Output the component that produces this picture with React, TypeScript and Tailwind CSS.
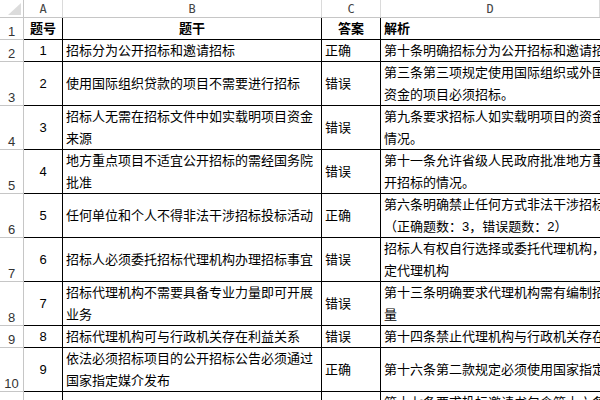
const COLS = ['A', 'B', 'C', 'D'];

type Row = {
    h: string;
    no: string;
    stem: string[];
    ans: string;
    note: string[];
};

const ROWS: Row[] = [
    { h: 'h-[22px]', no: '1', stem: ['招标分为公开招标和邀请招标'], ans: '正确', note: ['第十条明确招标分为公开招标和邀请招标。'] },
    { h: 'h-[44px]', no: '2', stem: ['使用国际组织贷款的项目不需要进行招标'], ans: '错误', note: ['第三条第三项规定使用国际组织或外国政府贷款', '资金的项目必须招标。'] },
    { h: 'h-[44px]', no: '3', stem: ['招标人无需在招标文件中如实载明项目资金', '来源'], ans: '错误', note: ['第九条要求招标人如实载明项目的资金来源等', '情况。'] },
    { h: 'h-[44px]', no: '4', stem: ['地方重点项目不适宜公开招标的需经国务院', '批准'], ans: '错误', note: ['第十一条允许省级人民政府批准地方重点项目不公', '开招标的情况。'] },
    { h: 'h-[44px]', no: '5', stem: ['任何单位和个人不得非法干涉招标投标活动'], ans: '正确', note: ['第六条明确禁止任何方式非法干涉招标投标活动。', '（正确题数：3，错误题数：2）'] },
    { h: 'h-[44px]', no: '6', stem: ['招标人必须委托招标代理机构办理招标事宜'], ans: '错误', note: ['招标人有权自行选择或委托代理机构，不得强制指', '定代理机构'] },
    { h: 'h-[44px]', no: '7', stem: ['招标代理机构不需要具备专业力量即可开展', '业务'], ans: '错误', note: ['第十三条明确要求代理机构需有编制招标文件的专业力', '量'] },
    { h: 'h-[22px]', no: '8', stem: ['招标代理机构可与行政机关存在利益关系'], ans: '错误', note: ['第十四条禁止代理机构与行政机关存在利益关系。'] },
    { h: 'h-[44px]', no: '9', stem: ['依法必须招标项目的公开招标公告必须通过', '国家指定媒介发布'], ans: '正确', note: ['第十六条第二款规定必须使用国家指定媒介发布。'] },
    { h: 'h-[44px]', no: '10', stem: ['投标邀请书应当载明招标人的名称和地址'], ans: '正确', note: ['第十七条要求投标邀请书包含第十六条规定的事项', '内容。'] },
];

function Lines({ lines }: { lines: string[] }) {
    return (
        <div className="flex flex-col">
            {lines.map((l, i) => (
                <span key={i} className="whitespace-nowrap leading-[22px]">{l}</span>
            ))}
        </div>
    );
}

export default function App() {
    return (
        <div className="w-[600px] h-[400px] overflow-hidden bg-white text-[13px] text-black font-['Liberation_Sans','Noto_Sans_CJK_SC',sans-serif]">
            {/* Column letters */}
            <div className="flex h-[18px] border-b border-[#c6c6c6]">
                <div className="w-[24px] shrink-0 border-r border-[#c6c6c6] flex items-end justify-end pr-[2px] pb-[2px]">
                    <svg width="13" height="12" viewBox="0 0 13 12">
                        <polygon points="13,0 13,12 0,12" fill="#dcdcdc" />
                    </svg>
                </div>
                {COLS.map((c, i) => (
                    <div
                        key={c}
                        className={`${['w-[39px]', 'w-[259px]', 'w-[59px]', 'flex-1'][i]} shrink-0 border-r border-[#dadada] flex items-center justify-center text-[12px] text-[#444] font-['DejaVu_Sans_Mono',monospace]`}
                    >
                        {c}
                    </div>
                ))}
            </div>

            {/* Header row */}
            <div className="flex h-[22px]">
                <div className="w-[24px] shrink-0 border-r border-b border-[#c6c6c6] flex items-end justify-center text-[#333] leading-none pb-[1px]">1</div>
                <div className="w-[39px] shrink-0 border-r border-b border-black flex items-center justify-center font-bold">题号</div>
                <div className="w-[259px] shrink-0 border-r border-b border-black flex items-center justify-center font-bold">题干</div>
                <div className="w-[59px] shrink-0 border-r border-b border-black flex items-center justify-center font-bold">答案</div>
                <div className="flex-1 border-b border-black flex items-center pl-[3px] font-bold">解析</div>
            </div>

            {ROWS.map((r, i) => (
                <div key={i} className={`flex ${r.h} shrink-0`}>
                    <div className="w-[24px] shrink-0 border-r border-b border-[#c6c6c6] flex items-end justify-center text-[#333] leading-none pb-[1px]">{i + 2}</div>
                    <div className="w-[39px] shrink-0 border-r border-b border-black flex items-center justify-center">{r.no}</div>
                    <div className="w-[259px] shrink-0 border-r border-b border-black flex items-center pl-[3px] overflow-hidden">
                        <Lines lines={r.stem} />
                    </div>
                    <div className="w-[59px] shrink-0 border-r border-b border-black flex items-center pl-[3px]">{r.ans}</div>
                    <div className="flex-1 min-w-0 border-b border-black flex items-center pl-[3px] overflow-hidden">
                        <Lines lines={r.note} />
                    </div>
                </div>
            ))}
        </div>
    );
}
